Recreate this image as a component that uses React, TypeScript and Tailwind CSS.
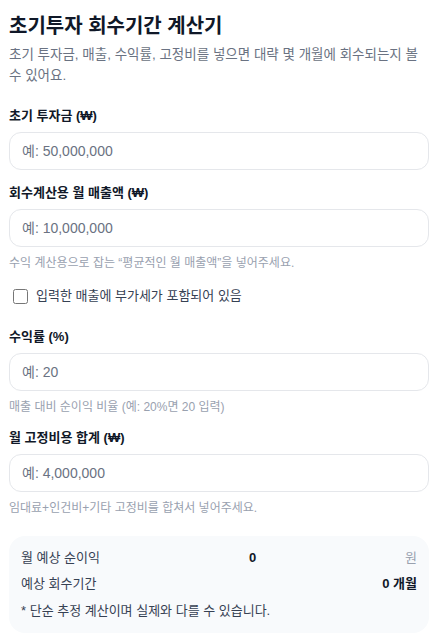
import { useState } from "react";

const fontStack = "font-['Liberation_Sans','Noto_Sans_CJK_KR',sans-serif]";

function Field({
  label,
  placeholder,
  help,
  value,
  onChange,
}: {
  label: string;
  placeholder: string;
  help?: string;
  value: string;
  onChange: (v: string) => void;
}) {
  return (
    <div className="flex flex-col">
      <label className="text-[13px] font-bold text-gray-900 leading-5">{label}</label>
      <input
        value={value}
        onChange={(e) => onChange(e.target.value)}
        placeholder={placeholder}
        className="mt-[6px] h-[38px] w-full rounded-xl border border-gray-200 px-3 text-sm text-gray-900 placeholder:text-gray-500 outline-none"
      />
      {help && <p className="mt-2 text-xs leading-4 text-gray-400">{help}</p>}
    </div>
  );
}

export default function App() {
  const [invest, setInvest] = useState("");
  const [sales, setSales] = useState("");
  const [rate, setRate] = useState("");
  const [fixed, setFixed] = useState("");
  const [vat, setVat] = useState(false);

  const salesNum = Number(sales.replace(/,/g, "")) || 0;
  const base = vat ? salesNum / 1.1 : salesNum;
  const profit = Math.round((base * (Number(rate) || 0)) / 100 - (Number(fixed.replace(/,/g, "")) || 0));
  const investNum = Number(invest.replace(/,/g, "")) || 0;
  const months = profit > 0 && investNum > 0 ? Math.ceil(investNum / profit) : 0;

  return (
    <div className={`${fontStack} bg-white pl-[9px] pr-3 pt-3 pb-2 text-gray-900`}>
      <h1 className="text-xl font-bold leading-7">초기투자 회수기간 계산기</h1>
      <p className="mt-1 text-[13.5px] leading-[21px] text-gray-500">
        초기 투자금, 매출, 수익률, 고정비를 넣으면 대략 몇 개월에 회수되는지 볼 수 있어요.
      </p>

      <div className="mt-5 flex flex-col gap-[13px]">
        <Field label="초기 투자금 (₩)" placeholder="예: 50,000,000" value={invest} onChange={setInvest} />
        <Field
          label="회수계산용 월 매출액 (₩)"
          placeholder="예: 10,000,000"
          help="수익 계산용으로 잡는 “평균적인 월 매출액”을 넣어주세요."
          value={sales}
          onChange={setSales}
        />
        <label className="mt-0.5 mb-2 flex h-5 items-center gap-2 pl-1 text-[13px] text-gray-700">
          <input
            type="checkbox"
            checked={vat}
            onChange={(e) => setVat(e.target.checked)}
            className="h-[15px] w-[15px] rounded border-gray-400"
          />
          입력한 매출에 부가세가 포함되어 있음
        </label>
        <Field
          label="수익률 (%)"
          placeholder="예: 20"
          help="매출 대비 순이익 비율 (예: 20%면 20 입력)"
          value={rate}
          onChange={setRate}
        />
        <Field
          label="월 고정비용 합계 (₩)"
          placeholder="예: 4,000,000"
          help="임대료+인건비+기타 고정비를 합쳐서 넣어주세요."
          value={fixed}
          onChange={setFixed}
        />
      </div>

      <div className="mt-5 rounded-2xl bg-slate-50 px-3 py-3 text-[13px] leading-5">
        <div className="flex items-center justify-between">
          <span className="text-gray-700">월 예상 순이익</span>
          <span className="font-bold text-gray-900">{profit > 0 ? profit.toLocaleString() : 0}</span>
          <span className="text-gray-400">원</span>
        </div>
        <div className="mt-1.5 flex items-center justify-between">
          <span className="text-gray-700">예상 회수기간</span>
          <span className="font-bold text-gray-900">{months} 개월</span>
        </div>
        <p className="mt-[7px] text-gray-700">* 단순 추정 계산이며 실제와 다를 수 있습니다.</p>
      </div>
    </div>
  );
}
